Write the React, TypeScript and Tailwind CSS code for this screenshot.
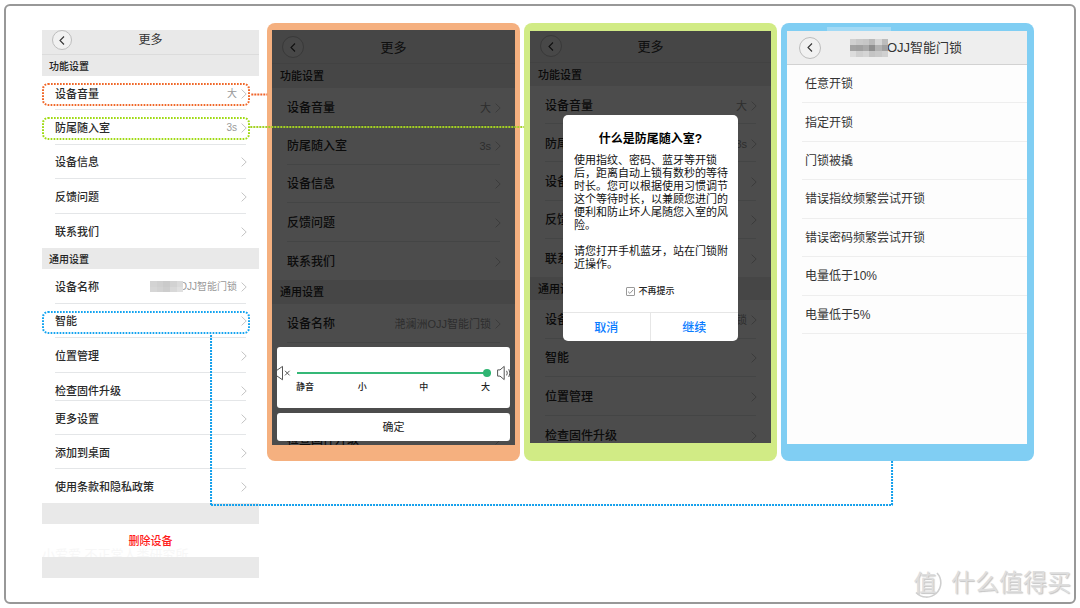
import type { ReactNode } from "react";

type Tone = { text: string; label: string; value: string; section: string };

const SMALL: Tone = { text: "text-[12px]", label: "text-[11px]", value: "text-[10px]", section: "text-[10px]" };
const LARGE: Tone = { text: "text-[13px]", label: "text-[12px]", value: "text-[11px]", section: "text-[11px]" };

function Chevron() {
  return (
    <svg className="h-[10px] w-[6px] shrink-0" viewBox="0 0 6 10" fill="none" stroke="#c4c4c4" strokeWidth="1">
      <path d="M0.6 0.6 5.2 5 0.6 9.4" />
    </svg>
  );
}

function BackButton({ size }: { size: string }) {
  return (
    <button type="button" aria-label="返回" className={`${size} flex shrink-0 items-center justify-center rounded-full border border-[#bdbdbd] bg-[#f1f1f1]`}>
      <svg className="h-[9px] w-[6px]" viewBox="0 0 6 9" fill="none" stroke="#333" strokeWidth="1.1">
        <path d="M5 0.5 1 4.5 5 8.5" />
      </svg>
    </button>
  );
}

function Header({ className, size, tone }: { className: string; size: string; tone: Tone }) {
  return (
    <header className={`${className} grid grid-cols-[1fr_auto_1fr] items-end border-b border-[#dcdcdc] bg-[#e9e9e9] px-[10px]`}>
      <BackButton size={size} />
      <h2 className={`${tone.text} self-end text-[#333] leading-[20px]`}>更多</h2>
    </header>
  );
}

function SectionTitle({ className, tone, children }: { className: string; tone: Tone; children: ReactNode }) {
  return (
    <h3 className={`${className} ${tone.section} flex items-center bg-[#e9e9e9] pt-[1px] font-medium text-[#222]`}>{children}</h3>
  );
}

function Row({
  label,
  value,
  tone,
  inset,
  last,
  outline,
}: {
  label: string;
  value?: ReactNode;
  tone: Tone;
  inset: string;
  last?: boolean;
  outline?: string;
}) {
  return (
    <li className={`${inset} relative flex min-h-0`}>
      <button
        type="button"
        className={`${last ? "" : "border-b border-[#e4e6e8]"} flex min-h-0 w-full items-center justify-between whitespace-nowrap pt-[2px]`}
      >
        <span className={`${tone.label} font-medium text-[#2a2a2a] leading-[18px]`}>{label}</span>
        <span className={`${tone.value} -mr-[1px] flex items-center gap-1 text-[#999] leading-[18px]`}>
          {value}
          <Chevron />
        </span>
      </button>
      {outline && (
        <svg className="pointer-events-none absolute left-0 top-[7px] h-[23px] w-[calc(100%-9px)]">
          <rect x="1" y="1" rx="5" height="21" className="w-[calc(100%-2px)]" fill="none" stroke={outline} strokeWidth="2" strokeDasharray="1.7 1.3" />
        </svg>
      )}
    </li>
  );
}

function Mosaic({ shades, className }: { shades: string[]; className: string }) {
  return (
    <span className={`${className} grid overflow-hidden`}>
      {shades.map((shade, i) => (
        <span key={i} style={{ backgroundColor: shade }} />
      ))}
    </span>
  );
}

const NAME_SHADES = ["#d3d3d3", "#cfcfcf", "#cacaca", "#d2d2d2", "#dadada", "#d6d6d6", "#d2d2d2", "#cdcdcd", "#d8d8d8", "#e0e0e0"];
const TITLE_SHADES = [
  "#d0d0d0", "#c9c9c9", "#c6c6c6", "#b9b9b9", "#d6d6d6", "#bcbcbc",
  "#a3a3a3", "#a0a0a0", "#a9a9a9", "#8f8f8f", "#b2b2b2", "#a1a1a1",
  "#dcdcdc", "#cfcfcf", "#d5d5d5", "#c4c4c4", "#c9c9c9", "#d0d0d0",
];

function SettingsList() {
  const inset = "px-[13px]";
  return (
    <section className="mr-1 mt-[7px] overflow-hidden">
      <Header className="h-[25px] pb-[5px]" size="size-[20px]" tone={SMALL} />
      <SectionTitle className="h-[21px] px-[7px]" tone={SMALL}>功能设置</SectionTitle>
      <ul className="grid h-[172px] auto-rows-fr">
        <Row label="设备音量" value="大" tone={SMALL} inset={inset} outline="#f0682a" />
        <Row label="防尾随入室" value="3s" tone={SMALL} inset={inset} outline="#a0da14" />
        <Row label="设备信息" tone={SMALL} inset={inset} />
        <Row label="反馈问题" tone={SMALL} inset={inset} />
        <Row label="联系我们" tone={SMALL} inset={inset} last />
      </ul>
      <SectionTitle className="h-[21px] px-[7px]" tone={SMALL}>通用设置</SectionTitle>
      <ul className="grid h-[104px] auto-rows-fr">
        <Row
          label="设备名称"
          value={
            <span className="flex items-center">
              <Mosaic shades={NAME_SHADES} className="z-10 -mr-1 h-[11px] w-[33px] grid-cols-5" />
              OJJ智能门锁
            </span>
          }
          tone={SMALL}
          inset={inset}
        />
        <Row label="智能" tone={SMALL} inset={inset} outline="#14a4f0" />
        <Row label="位置管理" tone={SMALL} inset={inset} />
      </ul>
      <ul className="grid h-[28px] pt-[6px]">
        <Row label="检查固件升级" tone={SMALL} inset={inset} />
      </ul>
      <ul className="grid h-[102px] auto-rows-fr">
        <Row label="更多设置" tone={SMALL} inset={inset} />
        <Row label="添加到桌面" tone={SMALL} inset={inset} />
        <Row label="使用条款和隐私政策" tone={SMALL} inset={inset} last />
      </ul>
      <div className="h-[21px] bg-[#e9e9e9]" />
      <div className="relative flex h-[33px] items-center justify-center">
        <button type="button" className="pt-[2px] text-[11px] font-medium text-[#ff1a1a]">删除设备</button>
        <span className="absolute left-0 top-[21px] whitespace-nowrap text-[13px] text-[#f7f7f7] leading-[20px]">
          小爱爱 不正常人类研究所
        </span>
      </div>
      <div className="relative h-[21px] bg-[#e9e9e9]" />
    </section>
  );
}

function DimmedSettings({
  header,
  size,
  title,
  first,
  children,
}: {
  header: string;
  size: string;
  title: string;
  first: string;
  children: ReactNode;
}) {
  const inset = "px-[15px]";
  return (
    <>
      <div className="bg-white">
        <Header className={header} size={size} tone={LARGE} />
        <SectionTitle className={title} tone={LARGE}>功能设置</SectionTitle>
        <ul className={`${first} grid auto-rows-fr`}>
          <Row label="设备音量" value="大" tone={LARGE} inset={inset} />
          <Row label="防尾随入室" value="3s" tone={LARGE} inset={inset} />
          <Row label="设备信息" tone={LARGE} inset={inset} />
          <Row label="反馈问题" tone={LARGE} inset={inset} />
          <Row label="联系我们" tone={LARGE} inset={inset} last />
        </ul>
        <SectionTitle className={title} tone={LARGE}>通用设置</SectionTitle>
        <ul className="grid h-[154px] auto-rows-fr">
          <Row label="设备名称" value="滟澜洲OJJ智能门锁" tone={LARGE} inset={inset} />
          <Row label="智能" tone={LARGE} inset={inset} />
          <Row label="位置管理" tone={LARGE} inset={inset} />
          <Row label="检查固件升级" tone={LARGE} inset={inset} last />
        </ul>
      </div>
      <div className="absolute inset-0 bg-black/70" />
      {children}
    </>
  );
}

function VolumePanel() {
  return (
    <section className="rounded-lg bg-[#f5b07f] px-[5px] pb-4 pt-[7px]">
      <div className="relative h-[415px] overflow-hidden">
        <DimmedSettings header="h-[34px] pb-[5px]" size="size-[22px]" title="h-6 px-2" first="h-[192px]">
          <div className="absolute inset-x-[5px] bottom-1 flex flex-col gap-[5px]">
            <div className="flex h-[61px] items-start justify-between overflow-hidden rounded-[3px] bg-white pt-[18px]">
              <svg className="h-4 w-[14px] shrink-0" viewBox="0 0 14 16" fill="none" stroke="#555" strokeWidth="1">
                <path d="M0 5.2 5.5 1.4V14.8L0 11M8 5.8l4.6 4.6M12.6 5.8 8 10.4" />
              </svg>
              <div className="mx-[6px] flex min-w-0 flex-1 flex-col">
                <input
                  type="range"
                  aria-label="设备音量"
                  min={0}
                  max={3}
                  defaultValue={3}
                  className="my-1 h-2 w-full appearance-none bg-transparent bg-[linear-gradient(#35b877,#35b877)] bg-[length:100%_2px] bg-center bg-no-repeat [&::-webkit-slider-thumb]:size-2 [&::-webkit-slider-thumb]:appearance-none [&::-webkit-slider-thumb]:rounded-full [&::-webkit-slider-thumb]:bg-[#2fb572]"
                />
                <div className="-ml-[1px] mr-[1px] flex justify-between text-[9px] font-medium text-[#222] leading-[12px]">
                  <span>静音</span>
                  <span className="-ml-[9px]">小</span>
                  <span>中</span>
                  <span>大</span>
                </div>
              </div>
              <svg className="h-4 w-[13px] shrink-0" viewBox="0 0 13 16" fill="none" stroke="#555" strokeWidth="1">
                <path d="M0.6 4.9H3L7.2 1.4V14.6L3 11.1H0.6ZM9.6 5.8Q11 8 9.6 10.4M11.8 4.2Q14 8 11.8 12" />
              </svg>
            </div>
            <button type="button" className="h-[28px] rounded-[3px] bg-white pt-[1px] text-[11px] text-[#222]">确定</button>
          </div>
        </DimmedSettings>
      </div>
    </section>
  );
}

function TailgatePanel() {
  return (
    <section className="rounded-lg bg-[#d1eb85] px-[6px] pb-[18px] pt-2">
      <div className="relative h-[412px] overflow-hidden">
        <DimmedSettings header="h-8 pb-[5px]" size="size-[22px]" title="h-[23px] px-2" first="h-[191px]">
          <div role="dialog" aria-label="什么是防尾随入室?" className="absolute inset-x-[33px] top-[84px] rounded-[5px] bg-white pt-4">
            <h2 className="text-center text-[12px] font-bold text-black leading-[16px]">什么是防尾随入室?</h2>
            <div className="ml-[11px] mr-[9px] mt-[7px] flex flex-col gap-[13px] text-[11px] text-[#111] leading-[13px]">
              <p>使用指纹、密码、蓝牙等开锁后，距离自动上锁有数秒的等待时长。您可以根据使用习惯调节这个等待时长，以兼顾您进门的便利和防止坏人尾随您入室的风险。</p>
              <p>请您打开手机蓝牙，站在门锁附近操作。</p>
            </div>
            <label className="mb-[14px] mt-[14px] flex h-[13px] items-center justify-center gap-[3px] text-[9px] font-medium text-[#222]">
              <span className="relative flex size-[9px]">
                <input type="checkbox" defaultChecked className="peer size-[9px] appearance-none rounded-[1px] border border-[#999]" />
                <svg className="pointer-events-none absolute inset-0 hidden peer-checked:block" viewBox="0 0 9 9" fill="none" stroke="#888" strokeWidth="0.9">
                  <path d="M2 4.6 3.9 6.4 7.2 2.8" />
                </svg>
              </span>
              不再提示
            </label>
            <div className="grid h-[29px] grid-cols-2 divide-x divide-[#e6e6e6] border-t border-[#e6e6e6] text-[12px] font-medium text-[#0a7cff]">
              <button type="button" className="pt-[1px]">取消</button>
              <button type="button" className="pt-[1px]">继续</button>
            </div>
          </div>
        </DimmedSettings>
      </div>
    </section>
  );
}

const TRIGGERS = ["任意开锁", "指定开锁", "门锁被撬", "错误指纹频繁尝试开锁", "错误密码频繁尝试开锁", "电量低于10%", "电量低于5%"];

function SmartPanel() {
  return (
    <section className="relative rounded-lg bg-[#80cef3] pb-[17px] pl-[6px] pr-[7px] pt-2">
      <span className="absolute left-[46px] top-1 h-[6px] w-[64px] bg-[#a3daf5]" />
      <div className="relative h-[413px] bg-[#fdfdfd]">
        <header className="grid h-[34px] grid-cols-[1fr_auto_1fr] items-center border-b border-[#d2d2d2] bg-[#eeeeee] pl-3 pr-[14px]">
          <BackButton size="size-[22px]" />
          <h2 className="flex items-center text-[13px] text-[#333]">
            <Mosaic shades={TITLE_SHADES} className="z-10 h-[18px] w-[38px] grid-cols-6" />
            <span className="-ml-[1px]">OJJ智能门锁</span>
          </h2>
        </header>
        <ul className="grid h-[269px] auto-rows-fr pl-[15px]">
          {TRIGGERS.map((t) => (
            <li key={t} className="flex min-h-0 border-b border-[#eeeeee]">
              <button type="button" className="w-full pl-[3px] pt-[1px] text-left text-[12px] text-[#333]">{t}</button>
            </li>
          ))}
        </ul>
      </div>
    </section>
  );
}

function Connectors() {
  return (
    <svg className="pointer-events-none absolute inset-0 h-full w-full" fill="none" strokeWidth="2" strokeDasharray="2 1">
      <line x1="21.1%" y1="71.5" x2="22.7%" y2="71.5" stroke="#f0642a" />
      <line x1="21%" y1="104" x2="48.6%" y2="104" stroke="#a3d122" />
      <g stroke="#14a0ec">
        <line x1="17.04%" y1="312" x2="17.04%" y2="482" />
        <line x1="17.04%" y1="482" x2="85.75%" y2="482" />
        <line x1="85.69%" y1="438" x2="85.69%" y2="482" />
      </g>
    </svg>
  );
}

function Watermark() {
  return (
    <div className="absolute bottom-[1px] right-[3px] flex items-center gap-[9px] whitespace-nowrap text-[#dedede] [text-shadow:1px_1px_1px_#c4c4c4]">
      <span className="relative flex size-[30px] items-center justify-center text-[23px] leading-none">
        <svg className="absolute inset-0" viewBox="0 0 30 30" fill="none" stroke="#cfcfcf" strokeWidth="1.6">
          <path d="M25 5A13.5 13.5 0 0 1 4 24.5" />
        </svg>
        <span className="-ml-1">值</span>
      </span>
      <span className="text-[24px] leading-[36px]">什么值得买</span>
    </div>
  );
}

export default function App() {
  return (
    <div className="min-h-screen bg-white p-1 font-['Liberation_Sans','Noto_Sans_CJK_SC',sans-serif]" lang="zh-CN">
      <main className="relative rounded-md border-2 border-[#989898] pb-6 pl-[36px] pr-[40px] pt-[17px]">
        <div className="relative grid grid-cols-[221fr_253fr_253fr_253fr] items-start gap-x-1">
          <SettingsList />
          <VolumePanel />
          <TailgatePanel />
          <SmartPanel />
          <Connectors />
        </div>
        <Watermark />
      </main>
    </div>
  );
}
